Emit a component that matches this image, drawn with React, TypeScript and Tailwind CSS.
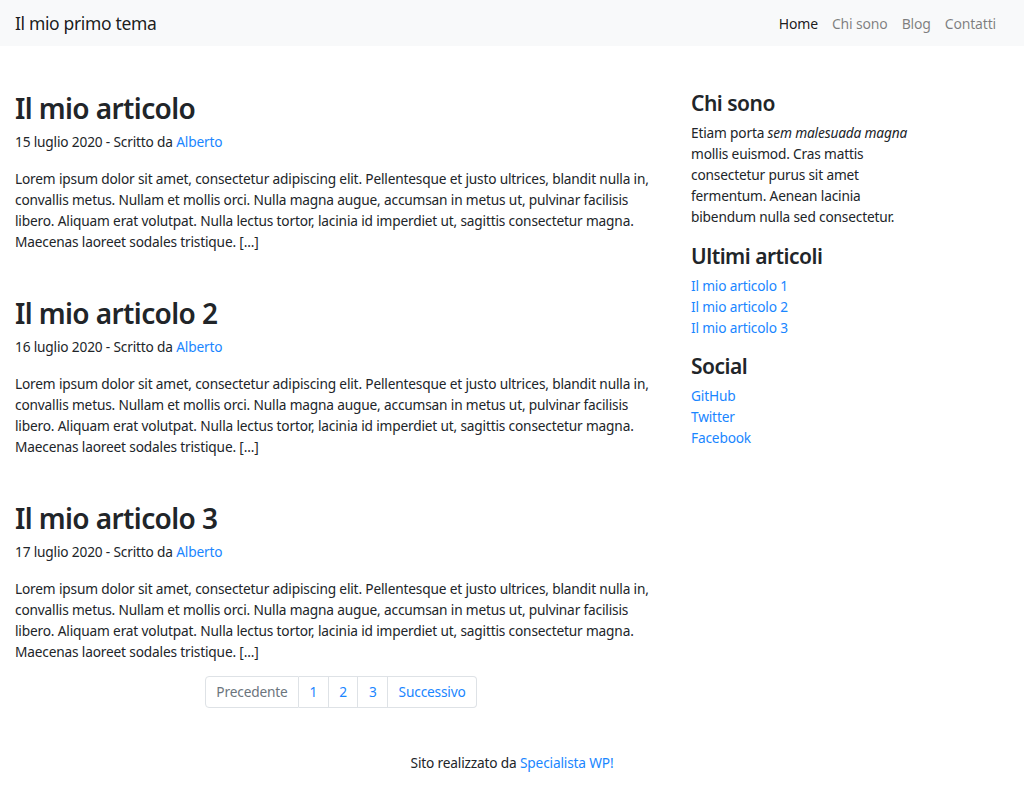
const articles = [
  { title: "Il mio articolo", date: "15 luglio 2020" },
  { title: "Il mio articolo 2", date: "16 luglio 2020" },
  { title: "Il mio articolo 3", date: "17 luglio 2020" },
];

const lorem =
  "Lorem ipsum dolor sit amet, consectetur adipiscing elit. Pellentesque et justo ultrices, blandit nulla in, convallis metus. Nullam et mollis orci. Nulla magna augue, accumsan in metus ut, pulvinar facilisis libero. Aliquam erat volutpat. Nulla lectus tortor, lacinia id imperdiet ut, sagittis consectetur magna. Maecenas laoreet sodales tristique. [...]";

const navLinks = [
  { label: "Home", active: true },
  { label: "Chi sono" },
  { label: "Blog" },
  { label: "Contatti" },
];

/**
 * Single post preview in the main column.
 */
const Article = ({ title, date }: { title: string; date: string }) => (
  <article className="mb-[44px]">
    <h2 className="mb-[6px] text-[28px] leading-[34px] font-semibold tracking-[-0.6px] text-[#212529]">
      {title}
    </h2>
    <p className="mb-[16px]">
      {date} - Scritto da{" "}
      <a href="#" className="text-[#1a86ff]">
        Alberto
      </a>
    </p>
    <p>{lorem}</p>
  </article>
);

export default function App() {
  return (
    <div className="min-h-[806px] bg-white font-['Noto_Sans',sans-serif] text-[13.7px] leading-[21px] tracking-[-0.17px] text-[#212529]">
      <nav className="flex h-[46px] items-center justify-between bg-[#f8f9fa] pl-[15px] pr-[21px]">
        <a href="#" className="text-[17.5px] tracking-[-0.35px] text-[rgba(0,0,0,0.9)]">
          Il mio primo tema
        </a>
        <ul className="flex text-[14px]">
          {navLinks.map((link) => (
            <li key={link.label}>
              <a
                href="#"
                className={
                  link.active
                    ? "px-[7px] text-[rgba(0,0,0,0.9)]"
                    : "px-[7px] text-[rgba(0,0,0,0.5)]"
                }
              >
                {link.label}
              </a>
            </li>
          ))}
        </ul>
      </nav>

      <div className="flex pt-[45px]">
        <main className="ml-[15px] w-[652px]">
          {articles.map((item) => (
            <Article key={item.title} title={item.title} date={item.date} />
          ))}

          <ul className="-mt-[30px] flex justify-center">
            <li className="rounded-l-[4px] border border-[#dee2e6] px-[10.5px] leading-[30px] text-[#6c757d]">
              Precedente
            </li>
            {["1", "2", "3"].map((n) => (
              <li
                key={n}
                className="border border-l-0 border-[#dee2e6] px-[10.5px] leading-[30px] text-[#1a86ff]"
              >
                {n}
              </li>
            ))}
            <li className="rounded-r-[4px] border border-l-0 border-[#dee2e6] px-[10.5px] leading-[30px] text-[#1a86ff]">
              Successivo
            </li>
          </ul>
        </main>

        <aside className="ml-[24px] w-[230px]">
          <h4 className="mb-[6px] text-[21px] leading-[25px] font-semibold tracking-[-0.5px]">
            Chi sono
          </h4>
          <p className="mb-[17px]">
            Etiam porta <em>sem malesuada magna</em> mollis euismod. Cras mattis
            consectetur purus sit amet fermentum. Aenean lacinia bibendum nulla
            sed consectetur.
          </p>

          <h4 className="mb-[6px] text-[21px] leading-[25px] font-semibold tracking-[-0.5px]">
            Ultimi articoli
          </h4>
          <ol className="mb-[16px] text-[#1a86ff]">
            <li>Il mio articolo 1</li>
            <li>Il mio articolo 2</li>
            <li>Il mio articolo 3</li>
          </ol>

          <h4 className="mb-[6px] text-[21px] leading-[25px] font-semibold tracking-[-0.5px]">
            Social
          </h4>
          <ol className="text-[#1a86ff]">
            <li>GitHub</li>
            <li>Twitter</li>
            <li>Facebook</li>
          </ol>
        </aside>
      </div>

      <footer className="pt-[44px] text-center">
        Sito realizzato da{" "}
        <a href="#" className="text-[#1a86ff]">
          Specialista WP!
        </a>
      </footer>
    </div>
  );
}
